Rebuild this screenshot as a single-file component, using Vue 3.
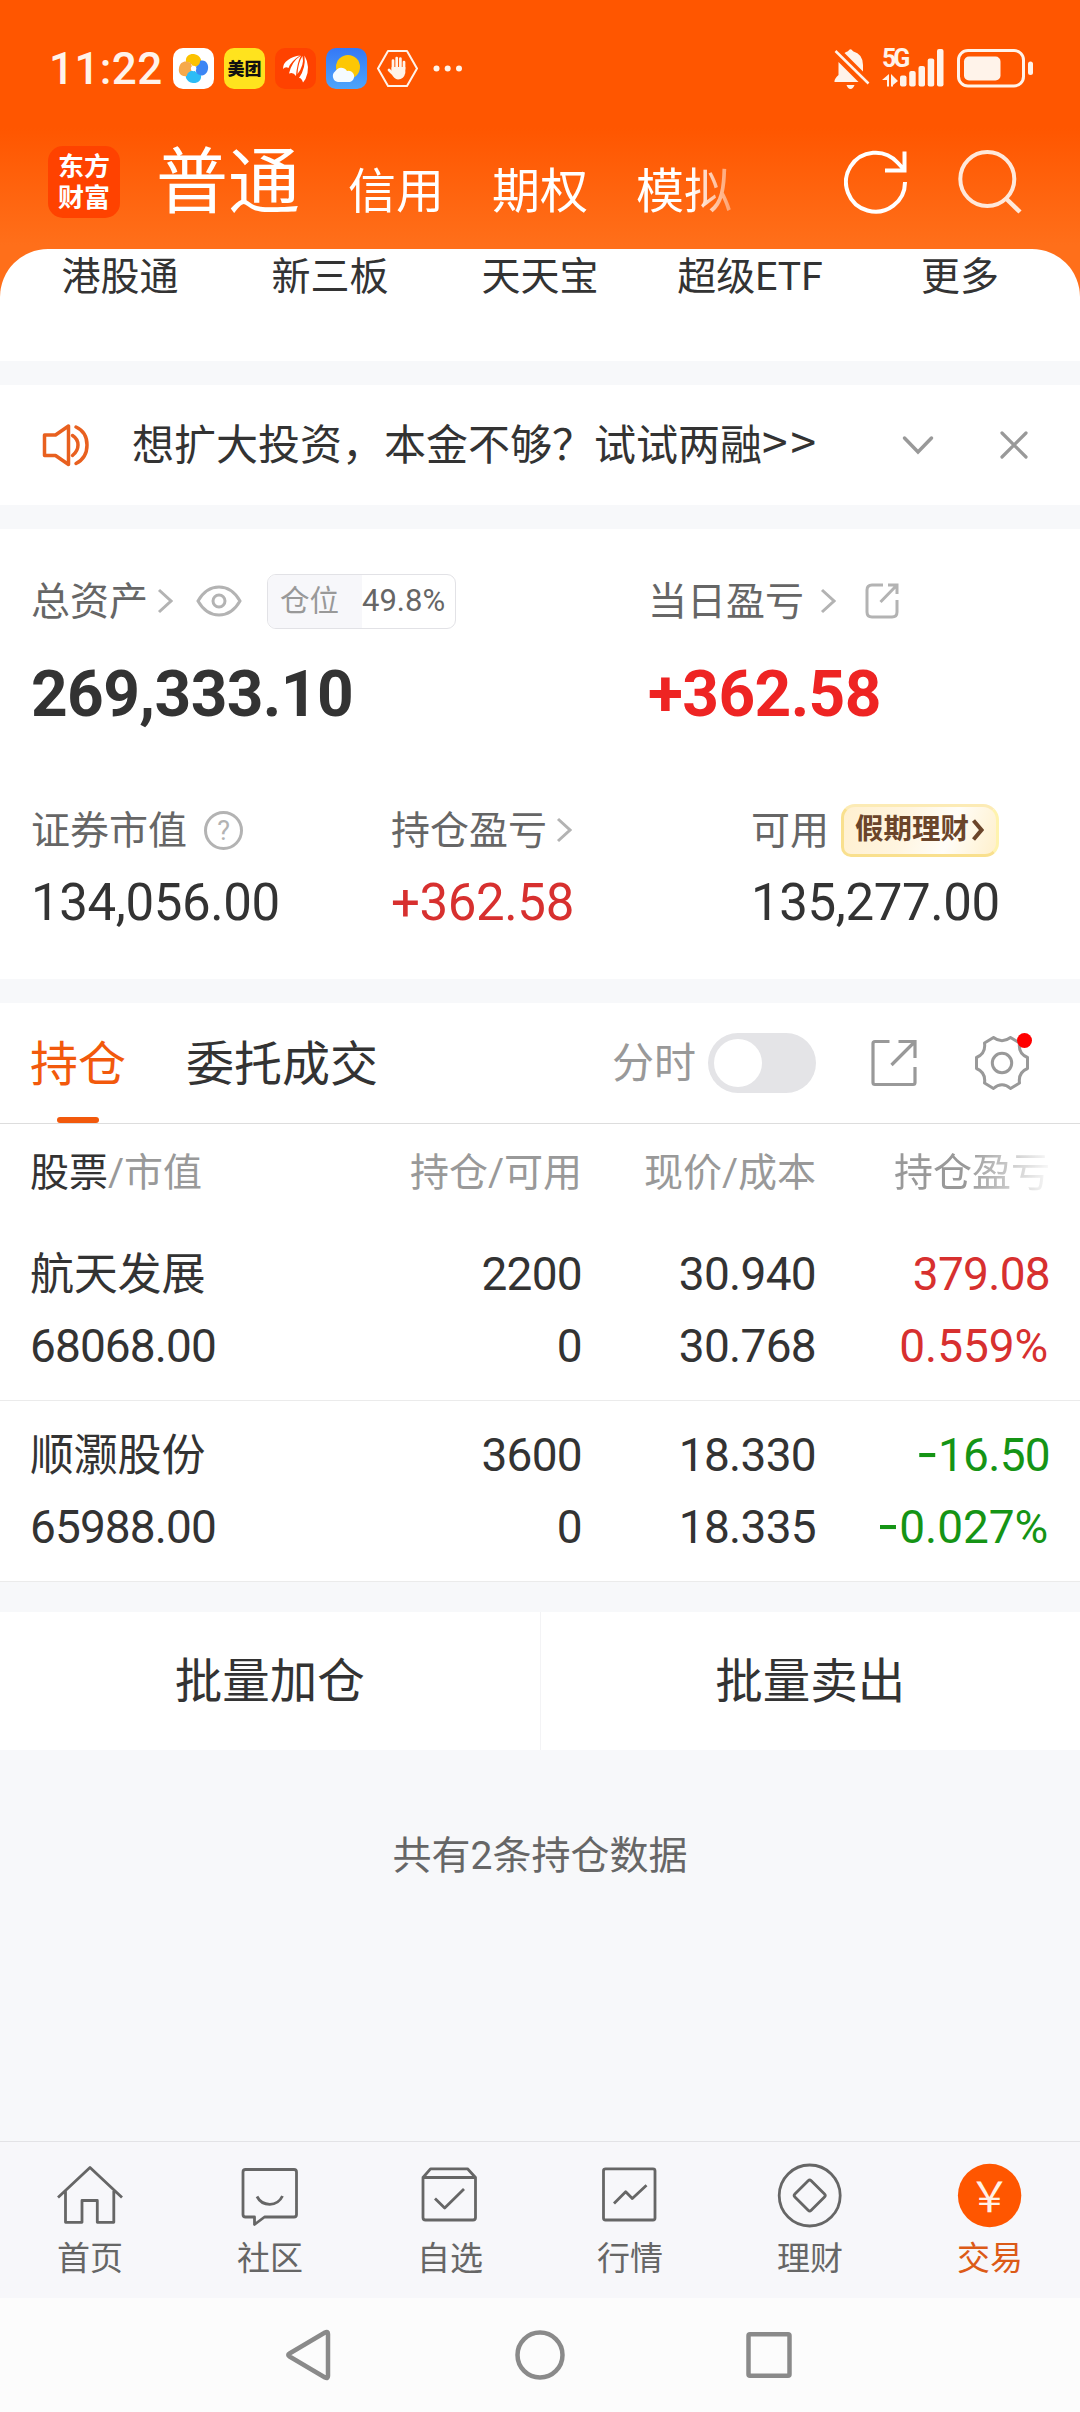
<script setup>
import { ref } from 'vue'

const accounts = ['信用', '期权', '模拟']
const shortcuts = ['港股通', '新三板', '天天宝', '超级ETF', '更多']
const minuteChart = ref(false)

const holdings = [
  {
    name: '航天发展',
    value: '68068.00',
    amount: '2200',
    usable: '0',
    price: '30.940',
    cost: '30.768',
    sign: '',
    profit: '379.08',
    rate: '0.559%',
  },
  {
    name: '顺灏股份',
    value: '65988.00',
    amount: '3600',
    usable: '0',
    price: '18.330',
    cost: '18.335',
    sign: '-',
    profit: '16.50',
    rate: '0.027%',
  },
]

const navItems = [
  {
    label: '首页',
    path: 'M4 37.5L36 7.5L68 37.5M11.5 31V62.3H28V40.5H43.3V62.3H59.8V31',
  },
  {
    label: '社区',
    path: 'M11.5 9.5H60Q62.5 9.5 62.5 12V54.5Q62.5 57 60 57H30.5L20.5 64.5V57H11.5Q9 57 9 54.5V12Q9 9.5 11.5 9.5ZM23 36.5Q27 44.3 35.8 44.3Q44.5 44.3 48.5 36',
  },
  {
    label: '自选',
    path: 'M9 17.5L16.5 8.8H53.5L61.5 17.5V57.5Q61.5 60 59 60H11.5Q9 60 9 57.5V17.5H61.5M21 38.5L30.7 48L50 29',
  },
  {
    label: '行情',
    path: 'M11.5 8.8H59Q61 8.8 61 10.8V58Q61 60 59 60H11.5Q9.5 60 9.5 58V10.8Q9.5 8.8 11.5 8.8ZM20 43.5L31.7 31.7L38.3 38.5L52.5 25.3',
  },
  {
    label: '理财',
    path: 'M5.2 35.5A30.5 30.5 0 1 1 66.2 35.5A30.5 30.5 0 1 1 5.2 35.5ZM34.2 20.7Q35.7 19.2 37.2 20.7L50.5 34Q52 35.5 50.5 37L37.2 50.3Q35.7 51.8 34.2 50.3L20.9 37Q19.4 35.5 20.9 34Z',
  },
  { label: '交易', active: true },
]
</script>

<template>
  <div class="page">
    <header class="top">
      <div class="status">
        <span class="time">11:22</span>
        <div class="apps">
          <svg width="41" height="41" viewBox="0 0 41 41">
            <rect width="41" height="41" rx="10" fill="#fff" />
            <path d="M21 20C18 14 15 14 13 14C12 8 17 5.5 21 6C28 7 30 14 27 18Q24 17 21 20Z" fill="#fcc200" />
            <path d="M21 20C26 17 27 16 27 13C33 11 36 17 35 21C34 28 27 29 23 26Q24 23 21 20Z" fill="#3c86f4" />
            <path d="M21 21C23 25 25 27 28 27C29 33 24 35.5 20 35C13 34 11 28 14 23Q18 24 21 21Z" fill="#2cbcf6" />
            <path d="M21 21C16 24 14 25 14 28C8 29 5 25 6 20C7 13 13 12 18 15Q18 18 21 21Z" fill="#f6a94a" />
            <circle cx="20.6" cy="20.5" r="2.7" fill="#fff" />
          </svg>
          <span class="meituan">美团</span>
          <svg width="41" height="41" viewBox="0 0 41 41">
            <rect width="41" height="41" rx="10" fill="#ff4200" />
            <path d="M8 21Q8 15 13 12Q18 8 25 7.5Q16 13 13.5 20Q10.500 18 8 21Z" fill="#fff" />
            <path d="M14 25.5Q17 13 26 7.5Q22 15 21 28Q18 23.500 14 25.500Z" fill="#fff" />
            <path d="M24 30Q31 20 29.5 7.5Q36 19 30.5 31L28 34.5Q26.500 29.500 24 30Z" fill="#fff" />
            <path d="M22.500 26Q23 15 27.500 8Q29.500 17 22.500 26Z" fill="#fff" />
          </svg>
          <svg width="41" height="41" viewBox="0 0 41 41">
            <defs>
              <linearGradient id="sky" x1="0" y1="0" x2="0" y2="1">
                <stop offset="0" stop-color="#3578f6" />
                <stop offset="1" stop-color="#4da5fb" />
              </linearGradient>
            </defs>
            <rect width="41" height="41" rx="10" fill="url(#sky)" />
            <circle cx="22" cy="19" r="12" fill="#fdc704" />
            <path d="M12 34A6 6 0 0 1 9 23.5A7 7 0 0 1 21 23A5.5 5.5 0 0 1 24 34Z" fill="#f5fbff" />
          </svg>
          <svg width="41" height="41" viewBox="0 0 41 41" fill="none" stroke="#fff3ea" stroke-linecap="round">
            <path d="M11 3H30L40 20.5L30 38H11L1 20.5Z" stroke-width="2" stroke-linejoin="round" />
            <path d="M16 21V12.5M19.7 20V10M23.4 20V10.5M27 21V14M12 22L15 25" stroke-width="2.7" />
            <path d="M14.7 19H28.3V25Q27 31 21 31.5Q17 31 14 25Z" fill="#fff3ea" stroke="none" />
          </svg>
          <svg class="more" width="29" height="7" viewBox="0 0 29 7" fill="#fff3ea">
            <circle cx="3.5" cy="3.5" r="3" />
            <circle cx="14.7" cy="3.5" r="3" />
            <circle cx="26" cy="3.5" r="3" />
          </svg>
        </div>
        <div class="signals">
          <svg width="36" height="41" viewBox="0 0 36 41">
            <path d="M10.5 5Q12 4 14 3.2Q16.5 -.5 19 3.2Q29 6 29 17V23.5ZM4.5 14L24.5 34H.5Q0 31 4.5 27Z" fill="#fff3ea" />
            <path d="M12.5 37H20.5Q19 41 16.5 41Q14 41 12.5 37Z" fill="#fff3ea" />
            <path d="M1.5 3L34.5 35.5" stroke="#fff3ea" stroke-width="2.5" />
          </svg>
          <div class="network">
            <span class="gen">5G</span>
            <svg width="62" height="40" viewBox="0 0 62 40" fill="#fff3ea">
              <path d="M0 31L7 25V37.5H5V31ZM9 25L16 32L11 36V37.5H9Z" />
              <rect x="18" y="26.5" width="6.5" height="11" rx="2" />
              <rect x="27.2" y="22" width="6.5" height="15.5" rx="2" />
              <rect x="36.5" y="17" width="6.5" height="20.5" rx="2" />
              <rect x="45.7" y="9.5" width="6.5" height="28" rx="2" />
              <rect x="55" y="0" width="6.5" height="37.5" rx="2" />
            </svg>
          </div>
          <svg class="battery" width="77" height="40" viewBox="0 0 77 40" fill="#fff3ea">
            <rect x="1.5" y="1.5" width="65" height="35.5" rx="9.5" fill="none" stroke="#fff3ea" stroke-width="3" />
            <rect x="7" y="7.5" width="36.5" height="24" rx="5" />
            <rect x="71" y="12.5" width="5" height="13.5" rx="2.5" />
          </svg>
        </div>
      </div>

      <div class="accounts">
        <div class="logo">东方<br />财富</div>
        <div class="account-tabs">
          <span class="current">普通</span>
          <span v-for="a in accounts" :key="a">{{ a }}</span>
        </div>
        <svg class="refresh" width="64" height="66" viewBox="0 0 64 66" fill="none" stroke="#fff" stroke-width="4">
          <path d="M61 33A29.5 29.5 0 1 1 53.5 13.500L60 20.500M60.5 2.500V21.500H41" />
        </svg>
        <svg width="64" height="64" viewBox="0 0 64 64" fill="none" stroke="#ffe8da" stroke-width="4">
          <circle cx="29.3" cy="29" r="27" />
          <path d="M48 48.5L62 62" stroke-width="4.5" />
        </svg>
      </div>
    </header>

    <section class="shortcuts">
      <span v-for="s in shortcuts" :key="s">{{ s }}</span>
    </section>

    <section class="notice">
      <svg width="48" height="44" viewBox="0 0 48 44" fill="none" stroke="#e8601f" stroke-width="3.5" stroke-linejoin="round">
        <path d="M2.5 12H13.5L26.5 3V41.5L13.5 32.5H2.5Z" />
        <path d="M30.5 12.5Q36 16 36 22Q36 28 30.5 32.5" stroke-linecap="round" />
        <path d="M34 4Q45 9 45 22Q45 35 34 40.5" stroke-linecap="round" />
      </svg>
      <span class="notice-text">想扩大投资，本金不够？试试两融<i>&gt;&gt;</i></span>
      <svg class="down" width="32" height="20" viewBox="0 0 32 20" fill="none" stroke="#999" stroke-width="3.5" stroke-linecap="round">
        <path d="M2.5 3L16 17L29.5 3" />
      </svg>
      <svg width="28" height="28" viewBox="0 0 28 28" fill="none" stroke="#999" stroke-width="3.2" stroke-linecap="round">
        <path d="M2 2L26 26M26 2L2 26" />
      </svg>
    </section>

    <section class="assets">
      <div class="main-row">
        <div class="cell wide">
          <div class="label">
            <span>总资产</span>
            <svg class="arrow tight" width="16" height="26" viewBox="0 0 16 26"><path d="M2 2L14 13L2 24" /></svg>
            <svg class="eye" width="46" height="32" viewBox="0 0 46 32" fill="none" stroke="#b3b3b3" stroke-width="3">
              <path d="M2 16Q10 2 23 2Q36 2 44 16Q36 30 23 30Q10 30 2 16Z" />
              <circle cx="23" cy="16" r="6" />
            </svg>
            <div class="ratio"><b>仓位</b><em>49.8%</em></div>
          </div>
          <div class="big">269,333.10</div>
        </div>
        <div class="cell">
          <div class="label">
            <span>当日盈亏</span>
            <svg class="arrow loose" width="16" height="26" viewBox="0 0 16 26"><path d="M2 2L14 13L2 24" /></svg>
            <svg class="share" width="34" height="36" viewBox="0 0 34 36" fill="none" stroke="#b3b3b3" stroke-width="3">
              <path d="M18 2H7Q2 2 2 7V29Q2 34 7 34H27Q32 34 32 29V17M23 2H32V11M32 2L15.5 19" />
            </svg>
          </div>
          <div class="big up">+362.58</div>
        </div>
      </div>
      <div class="sub-row">
        <div class="cell">
          <div class="label">
            <span>证券市值</span>
            <div class="help">?</div>
          </div>
          <div class="num">134,056.00</div>
        </div>
        <div class="cell">
          <div class="label">
            <span>持仓盈亏</span>
            <svg class="arrow tight" width="16" height="26" viewBox="0 0 16 26"><path d="M2 2L14 13L2 24" /></svg>
          </div>
          <div class="num red">+362.58</div>
        </div>
        <div class="cell">
          <div class="label">
            <span>可用</span>
            <div class="promo">
              <span>假期理财</span>
              <svg width="12" height="22" viewBox="0 0 12 22" fill="none" stroke="#6b452a" stroke-width="4"><path d="M1.5 1.5L9.5 11L1.5 20.5" /></svg>
            </div>
          </div>
          <div class="num">135,277.00</div>
        </div>
      </div>
    </section>

    <section class="positions">
      <div class="tabs">
        <span class="tab on">持仓</span>
        <span class="tab">委托成交</span>
        <span class="minute">分时</span>
        <button class="switch" :class="{ open: minuteChart }" @click="minuteChart = !minuteChart"></button>
        <svg class="export" width="46" height="48" viewBox="0 0 46 48" fill="none" stroke="#999" stroke-width="3.2">
          <path d="M18.5 2.5H4Q2 2.5 2 4.5V43.5Q2 45.5 4 45.5H42Q44 45.5 44 43.5V28M27.5 2.5H44V19M44 2.5L20.5 26" />
        </svg>
        <div class="gear">
          <svg width="54" height="54" viewBox="0 0 54 54" fill="none" stroke="#999" stroke-width="3" stroke-linejoin="round">
            <path d="M18.5 1.5Q27 8 35.5 1.5L44.5 7Q43 17.5 52.5 21.5V32.5Q43 36.5 44.5 47L35.5 52.5Q27 45 18.5 52.5L9.5 47Q11 36.5 1.5 32.5V21.5Q11 17.5 9.5 7Z" />
            <circle cx="27" cy="27" r="9.7" />
          </svg>
          <i></i>
        </div>
      </div>

      <div class="row head">
        <span><b>股票</b>/市值</span>
        <span>持仓/可用</span>
        <span>现价/成本</span>
        <span class="faded">持仓盈亏</span>
      </div>
      <div v-for="h in holdings" :key="h.name" class="row">
        <div class="col"><span class="name">{{ h.name }}</span><span>{{ h.value }}</span></div>
        <div class="col"><span>{{ h.amount }}</span><span>{{ h.usable }}</span></div>
        <div class="col"><span>{{ h.price }}</span><span>{{ h.cost }}</span></div>
        <div class="col" :class="h.sign ? 'green' : 'red'">
          <span><i>{{ h.sign }}</i>{{ h.profit }}</span>
          <span class="rate"><i>{{ h.sign }}</i>{{ h.rate }}</span>
        </div>
      </div>
    </section>

    <section class="batch">
      <div>批量加仓</div>
      <div>批量卖出</div>
    </section>

    <p class="summary">共有2条持仓数据</p>

    <nav class="nav">
      <div v-for="n in navItems" :key="n.label" class="nav-item" :class="{ active: n.active }">
        <svg v-if="n.path" width="72" height="72" viewBox="0 0 72 72" fill="none" stroke="#666" stroke-width="2.8">
          <path :d="n.path" stroke-linejoin="round" />
        </svg>
        <svg v-else width="72" height="72" viewBox="0 0 72 72">
          <circle cx="35.6" cy="35.5" r="31.7" fill="#ff5600" />
          <text x="35.6" y="51.5" text-anchor="middle" class="yen">￥</text>
        </svg>
        <span>{{ n.label }}</span>
      </div>
    </nav>

    <footer class="system">
      <svg width="50" height="54" viewBox="0 0 50 54"><path d="M5.5 25.5L41 4.5Q44 3 44 6V48Q44 51 41 49.5L5.5 28.5Q3 27 5.5 25.5Z" /></svg>
      <svg width="54" height="54" viewBox="0 0 54 54"><circle cx="27" cy="27" r="22.5" /></svg>
      <svg width="50" height="54" viewBox="0 0 50 54"><rect x="2.5" y="6.3" width="41" height="41.5" rx="1.5" /></svg>
    </footer>
  </div>
</template>

<style>
body {
  background: #f7f7fa;
}
</style>

<style scoped>
.page {
  display: flex;
  flex-direction: column;
  width: 1080px;
  height: 2412px;
  overflow: hidden;
  background: #f7f8fa;
  color: #333;
  font-family: Roboto, 'Noto Sans CJK SC', sans-serif;
}

svg {
  display: block;
  flex: none;
}

i,
em {
  font-style: normal;
}

/* header */

.top {
  height: 297px;
  margin-bottom: -48px;
  flex: none;
  background: linear-gradient(#ff5600 0, #ff5600 128px, #ff6f1a 245px);
}

.status {
  display: flex;
  align-items: center;
  height: 137px;
  padding: 0 46px 0 49px;
  color: #fff3ea;
}

.time {
  width: 124px;
  font-size: 44px;
  font-weight: 500;
  letter-spacing: 0.4px;
}

.apps {
  display: flex;
  align-items: center;
  gap: 10px;
}

.more {
  margin-left: 5px;
}

.meituan {
  width: 41px;
  height: 41px;
  border-radius: 10px;
  background: #ffe31e;
  color: #111;
  font-size: 17px;
  font-weight: 900;
  line-height: 42px;
  text-align: center;
}

.signals {
  display: flex;
  align-items: center;
  gap: 12px;
  margin-left: auto;
}

.network {
  position: relative;
}

.battery {
  margin-left: 1px;
}

.gen {
  position: absolute;
  left: 0;
  top: -4px;
  font-size: 25px;
  font-weight: 700;
  line-height: 28px;
  letter-spacing: -3px;
}

.accounts {
  display: flex;
  align-items: center;
  height: 90px;
  padding: 0 58px 0 48px;
}

.logo {
  box-sizing: border-box;
  width: 72px;
  height: 72px;
  padding-top: 6px;
  border-radius: 15px;
  background: #ff4200;
  color: #fff;
  font-size: 26px;
  font-weight: 700;
  line-height: 31px;
  text-align: center;
}

.account-tabs {
  display: flex;
  align-items: baseline;
  gap: 48px;
  width: 588px;
  padding-top: 10px;
  margin-left: 36px;
  color: #fff;
  font-size: 48px;
  line-height: 90px;
  -webkit-mask-image: linear-gradient(90deg, #000 535px, transparent 600px);
  mask-image: linear-gradient(90deg, #000 535px, transparent 600px);
}

.account-tabs span {
  position: relative;
  top: 1px;
}

.account-tabs .current {
  top: 0;
  font-size: 72px;
}

.refresh {
  margin: 0 50px 0 auto;
}

.shortcuts {
  display: flex;
  flex: none;
  box-sizing: border-box;
  height: 112px;
  padding: 0 15px;
  border-radius: 48px 48px 0 0;
  background: #fff;
  font-size: 39px;
  line-height: 57px;
}

.shortcuts span {
  flex: 1;
  text-align: center;
}

/* notice */

.notice {
  display: flex;
  align-items: center;
  flex: none;
  box-sizing: border-box;
  height: 120px;
  margin: 24px 0;
  padding: 0 52px 0 42px;
  background: #fff;
}

.notice-text {
  margin-left: 42px;
  font-size: 42px;
  line-height: 60px;
  padding-top: 2px;
}

.notice-text i {
  font-family: 'Noto Sans CJK SC', sans-serif;
  font-size: 46px;
  line-height: 1;
  letter-spacing: 3px;
}

.down {
  margin: 0 66px 0 auto;
}

/* assets */

.assets {
  box-sizing: border-box;
  flex: none;
  height: 450px;
  padding: 42px 0 0 31px;
  background: #fff;
}

.main-row,
.sub-row {
  display: flex;
}

.main-row {
  height: 229px;
}

.cell {
  flex: none;
  width: 360px;
}

.cell.wide {
  width: 617px;
}

.label {
  display: flex;
  align-items: center;
  height: 60px;
  color: #666;
  font-size: 39px;
  line-height: 58px;
}

.label > span {
  padding-top: 2px;
}

.arrow {
  fill: none;
  stroke: #b3b3b3;
  stroke-width: 3;
}

.tight {
  margin-left: 9px;
}

.loose {
  margin-left: 16px;
}

.eye {
  margin-left: 23px;
}

.ratio {
  display: flex;
  box-sizing: border-box;
  width: 189px;
  height: 55px;
  margin-left: 25px;
  border: 1px solid #e2e2e6;
  border-radius: 9px;
  overflow: hidden;
  line-height: 52px;
}

.ratio b {
  width: 94px;
  background: #f7f7fa;
  color: #999;
  font-size: 29.5px;
  font-weight: 400;
  text-indent: 12px;
}

.ratio em {
  font-size: 31px;
}

.share {
  margin-left: 29px;
}

.big {
  margin-top: 21px;
  font-size: 64px;
  font-weight: 700;
  line-height: 86px;
  letter-spacing: -0.6px;
}

.up {
  color: #ee2423;
}

.num {
  margin-top: 13px;
  font-size: 51px;
  line-height: 60px;
  letter-spacing: -0.4px;
}

.red {
  color: #d7302f;
}

.green {
  color: #159415;
}

.help {
  box-sizing: border-box;
  width: 39px;
  height: 39px;
  margin-left: 17px;
  border: 3px solid #b3b3b3;
  border-radius: 50%;
  color: #b3b3b3;
  font-size: 27px;
  line-height: 34px;
  text-align: center;
}

.promo {
  display: flex;
  align-items: center;
  box-sizing: border-box;
  width: 158px;
  height: 53px;
  margin-left: 12px;
  padding-left: 11px;
  border: 3px solid #f9e08e;
  border-top-color: #fcebb5;
  border-right-color: #fff3ae;
  border-radius: 14px 16px 14px 10px;
  background: linear-gradient(110deg, #fff0d0 0%, #fff5e0 40%, #fffdf8 68%, #fff0cc 100%);
  color: #6b452a;
  font-size: 28.5px;
  font-weight: 700;
  line-height: 48px;
}

.promo svg {
  margin-left: 3px;
}

/* positions */

.positions {
  flex: none;
  margin-top: 24px;
  background: #fff;
}

.tabs {
  display: flex;
  align-items: center;
  height: 120px;
  padding: 0 51px 0 30px;
  border-bottom: 1px solid #ddd;
}

.tab {
  position: relative;
  height: 120px;
  margin-right: 60px;
  font-size: 48px;
  line-height: 123px;
}

.on {
  color: #f2590c;
}

.on::after {
  content: '';
  position: absolute;
  left: 27px;
  bottom: 0;
  width: 42px;
  height: 6px;
  border-radius: 3px;
  background: #f2590c;
}

.minute {
  margin-left: auto;
  padding-top: 2px;
  color: #999;
  font-size: 42px;
  line-height: 60px;
}

.switch {
  width: 108px;
  height: 60px;
  margin-left: 12px;
  padding: 6px;
  border: none;
  border-radius: 30px;
  background: #e4e4e7;
}

.switch::before {
  content: '';
  display: block;
  width: 48px;
  height: 48px;
  border-radius: 50%;
  background: #fff;
}

.switch.open::before {
  margin-left: 48px;
}

.export {
  margin: 0 58px 0 55px;
}

.gear {
  position: relative;
}

.gear i {
  position: absolute;
  right: -3px;
  top: -3px;
  width: 15px;
  height: 15px;
  border-radius: 50%;
  background: #f00;
}

.row {
  display: grid;
  grid-template-columns: 318px 234px 234px 234px;
  padding: 18px 30px;
  border-bottom: 1px solid #ebebeb;
  font-size: 46px;
  line-height: 73px;
  letter-spacing: -0.7px;
  text-align: right;
}

.row > :first-child {
  text-align: left;
}

.col {
  display: flex;
  flex-direction: column;
}

.col:first-child {
  letter-spacing: -0.9px;
}

.col span {
  height: 72px;
}

.col i {
  font-family: Inter, sans-serif;
  font-size: 50px;
  line-height: 1;
}

.col .name {
  font-size: 44px;
  line-height: 75px;
  letter-spacing: -0.2px;
}

.col .rate {
  margin-right: 2px;
  letter-spacing: -0.1px;
}

.head {
  height: 96px;
  padding-top: 0;
  padding-bottom: 0;
  border: none;
  color: #999;
  font-size: 39px;
  line-height: 99px;
  letter-spacing: 0;
}

.head b {
  color: #333;
  font-weight: 400;
}

.faded {
  -webkit-mask-image: linear-gradient(90deg, #000 150px, rgba(0, 0, 0, 0.1) 230px);
  mask-image: linear-gradient(90deg, #000 150px, rgba(0, 0, 0, 0.1) 230px);
}

.batch {
  display: flex;
  flex: none;
  height: 138px;
  margin-top: 30px;
  background: #fff;
  font-size: 47.5px;
  line-height: 140px;
  text-align: center;
}

.batch div {
  flex: 1;
}

.batch div + div {
  border-left: 1px solid #f3f3f5;
}

.summary {
  margin: 76px 0 0;
  color: #666;
  font-size: 39px;
  line-height: 60px;
  text-align: center;
}

/* bottom bars */

.nav {
  display: flex;
  flex: none;
  box-sizing: border-box;
  height: 157px;
  margin-top: auto;
  padding-top: 18px;
  border-top: 1px solid #e3e3e6;
  background: #f7f7fa;
}

.nav-item {
  display: flex;
  flex-direction: column;
  align-items: center;
  flex: 1;
  color: #666;
  font-size: 33px;
  line-height: 54px;
}

.active {
  color: #dc5a17;
}

.yen {
  fill: #fff1e6;
  font-family: 'Noto Sans CJK SC', sans-serif;
  font-size: 42px;
}

.system {
  display: flex;
  align-items: center;
  justify-content: center;
  gap: 179px;
  flex: none;
  height: 114px;
  background: #fcfcfc;
}

.system svg {
  fill: none;
  stroke: #8a8a8a;
  stroke-width: 4.5;
  stroke-linejoin: round;
}
</style>
